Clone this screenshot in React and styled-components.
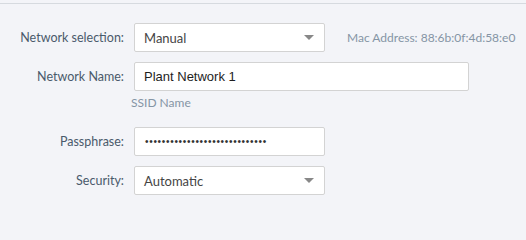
import React from "react";
import styled, { createGlobalStyle } from "styled-components";

const GlobalStyle = createGlobalStyle`
  html, body {
    margin: 0;
    padding: 0;
    background: #f3f4f8;
  }
  body {
    font-family: Lato, "Open Sans", sans-serif;
  }
`;

const Page = styled.div`
  width: 526px;
  height: 210px;
  background: #f3f4f8;
  padding-top: 3px;
  box-sizing: border-box;
`;

const Panel = styled.div`
  border-top: 1px solid #d6dadf;
  padding-top: 19px;
`;

const Form = styled.div`
  display: grid;
  grid-template-columns: 124px auto;
  column-gap: 10px;
  row-gap: 10px;
  align-items: center;
`;

const Label = styled.label`
  justify-self: end;
  font-size: 12.5px;
  color: #4a5a6b;
  white-space: nowrap;
`;

const Row = styled.div`
  display: flex;
  align-items: center;
  gap: 22px;
`;

const Box = styled.div`
  box-sizing: border-box;
  height: 29px;
  width: ${({ wide }) => (wide ? "335px" : "191px")};
  background: #fff;
  border: 1px solid #d3d3d3;
  border-radius: 2px;
  display: flex;
  align-items: center;
  padding: 0 9px;
`;

const SelectText = styled.span`
  flex: 1;
  font-size: 13px;
  color: #444;
`;

const Caret = styled.span`
  width: 0;
  height: 0;
  border-left: 5px solid transparent;
  border-right: 5px solid transparent;
  border-top: 5px solid #888;
  margin-right: 1px;
`;

const InputText = styled.span`
  font-family: "Liberation Sans", Arial, sans-serif;
  font-size: 13px;
  color: #1e1e1e;
`;

const Dots = styled.span`
  font-family: "Liberation Sans", Arial, sans-serif;
  font-size: 10px;
  letter-spacing: 0.7px;
  color: #333;
  padding-left: 1px;
`;

const Note = styled.span`
  font-size: 12px;
  color: #8595a5;
  white-space: nowrap;
`;

const Hint = styled(Note)`
  margin: -6px 0 6px -3px;
  line-height: 16px;
`;

const Select = ({ value }) => (
  <Box>
    <SelectText>{value}</SelectText>
    <Caret />
  </Box>
);

export default function App() {
  return (
    <>
      <GlobalStyle />
      <Page>
        <Panel>
          <Form>
            <Label>Network selection:</Label>
            <Row>
              <Select value="Manual" />
              <Note>Mac Address: 88:6b:0f:4d:58:e0</Note>
            </Row>

            <Label>Network Name:</Label>
            <Box wide>
              <InputText>Plant Network 1</InputText>
            </Box>

            <span />
            <Hint>SSID Name</Hint>

            <Label>Passphrase:</Label>
            <Box>
              <Dots>{"•".repeat(29)}</Dots>
            </Box>

            <Label>Security:</Label>
            <Select value="Automatic" />
          </Form>
        </Panel>
      </Page>
    </>
  );
}
